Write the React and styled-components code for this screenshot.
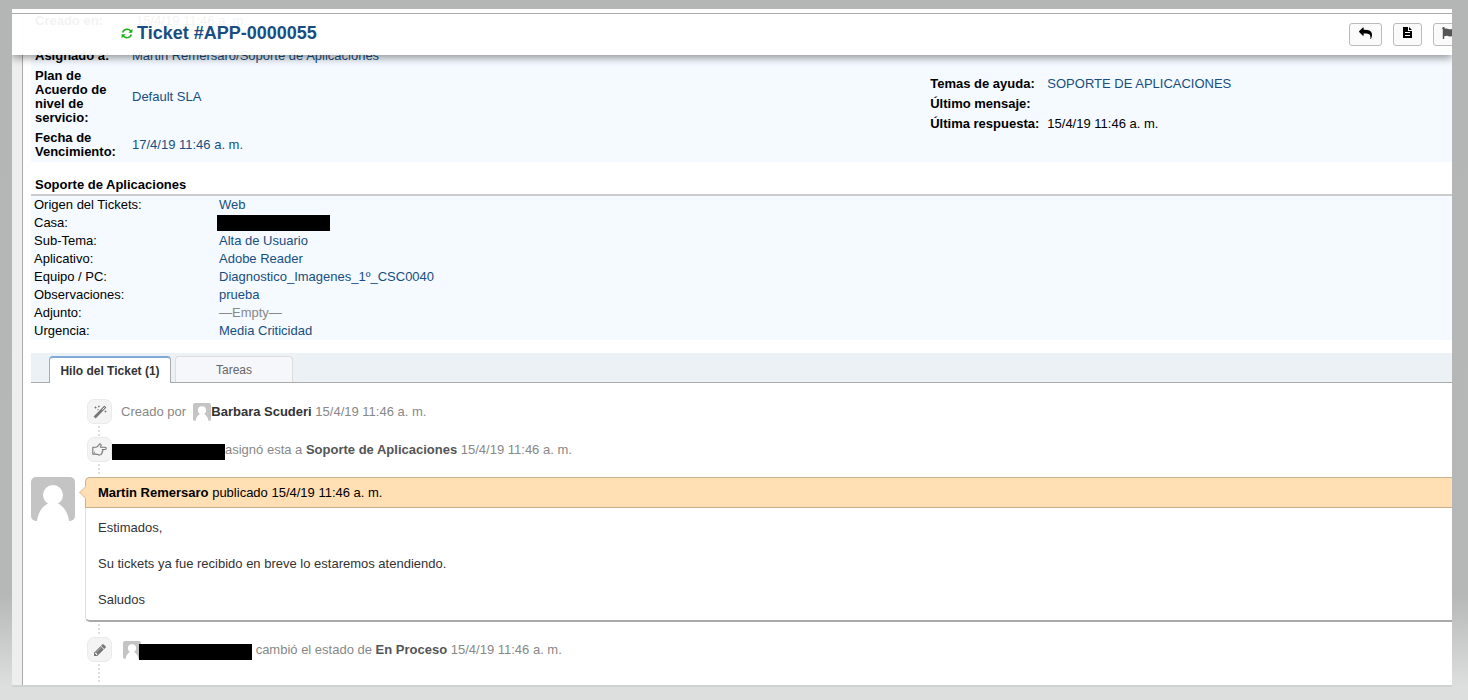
import React from 'react';
import styled, { createGlobalStyle } from 'styled-components';
import { FaFlag } from 'react-icons/fa';

const colors = {
  link: '#184e81',
  text: '#000',
  body: '#333',
  muted: '#888',
  panel: '#f4faff',
  tabs: '#ecf1f5',
  border: '#aaa',
  orange: '#ffdfb3',
};

const GlobalStyle = createGlobalStyle`
  * {
    box-sizing: border-box;
  }

  body {
    margin: 0;
    font-family: 'Liberation Sans', Arial, sans-serif;
    font-size: 13px;
    line-height: 18px;
    color: ${colors.text};
  }

  a {
    color: ${colors.link};
    text-decoration: none;
  }
`;

const Desktop = styled.div`
  display: flex;
  min-height: 100vh;
  padding: 9px 16px 15px 12px;
  background: linear-gradient(#b4b6b5 0, #b6b8b7 85%, #dddede 98%);
`;

const Page = styled.div`
  position: relative;
  display: flex;
  flex: 1;
  min-width: 0;
  padding-left: 10px;
  overflow: hidden;
  background: #eee;
  box-shadow: 0 2px 0 #d0d2d1;
`;

const Content = styled.main`
  flex: 1;
  min-width: 0;
  padding-left: 8px;
  background: #fff;
  border-left: 1px solid ${colors.border};
`;

const Sticky = styled.header`
  position: absolute;
  top: 4px;
  left: 0;
  right: 0;
  display: flex;
  justify-content: space-between;
  height: 42px;
  padding-left: 109px;
  background: rgba(255, 255, 255, 0.95);
  border-top: 1px solid ${colors.border};
  box-shadow: 0 -4px 0 #fff, 0 3px 8px rgba(0, 0, 0, 0.4);
  clip-path: inset(-4px 0 -20px 0);
`;

const Title = styled.h2`
  display: flex;
  align-items: center;
  gap: 4px;
  margin: 0;
  height: 38px;
  font-size: 18px;
  line-height: 24px;
`;

const Actions = styled.div`
  display: flex;
  gap: 11px;
  margin-top: 9px;
  margin-right: -10px;
`;

const ActionButton = styled.button`
  display: flex;
  justify-content: center;
  width: ${({ $wide }) => ($wide ? 33 : 29)}px;
  height: 23px;
  padding: 3px 0 0;
  color: ${({ $color }) => $color || '#000'};
  background: #fafafa;
  border: 1px solid #bbb;
  border-radius: 3px;
`;

const InfoPanel = styled.section`
  display: flex;
  padding-top: 2px;
  background: ${colors.panel};
`;

const InfoColumn = styled.div`
  width: ${({ $width }) => $width || 'auto'};
  padding-top: ${({ $top }) => $top || 0}px;
`;

const InfoTable = styled.table`
  border-collapse: collapse;
  margin-top: ${({ $gap }) => $gap || 0}px;

  th {
    width: ${({ $labelWidth }) => $labelWidth}px;
    padding: 3px 4px;
    font-weight: bold;
    line-height: 14px;
    text-align: left;
    white-space: ${({ $nowrap }) => ($nowrap ? 'nowrap' : 'normal')};
  }

  td {
    padding: 3px 4px;
    line-height: 14px;
  }
`;

const SectionTitle = styled.h3`
  margin: 14px 0 0;
  padding: 0 4px;
  height: 20px;
  font-size: 13px;
  line-height: 18px;
  border-bottom: 2px solid #ccc;
`;

const DetailTable = styled.table`
  width: 100%;
  border-collapse: collapse;
  background: ${colors.panel};

  th,
  td {
    height: 18px;
    padding: 0 3px;
    font-weight: normal;
    text-align: left;
  }

  th {
    width: 185px;
  }
`;

const Empty = styled.a`
  && {
    color: ${colors.muted};
  }
`;

const Redacted = styled.span`
  display: block;
  flex: none;
  width: 113px;
  height: 16px;
  margin: ${({ $margin }) => $margin || 0};
  background: #000;
`;

const Tabs = styled.nav`
  display: flex;
  align-items: flex-end;
  gap: 4px;
  height: 30px;
  margin-top: 13px;
  padding-left: 18px;
  font-size: 12px;
  background: ${colors.tabs};
  border-bottom: 1px solid ${colors.border};
`;

const Tab = styled.a`
  && {
    width: ${({ $active }) => ($active ? 122 : 118)}px;
    height: ${({ $active }) => ($active ? 27 : 26)}px;
    margin-bottom: ${({ $active }) => ($active ? -1 : 0)}px;
    color: ${({ $active }) => ($active ? colors.body : '#666')};
    font-weight: ${({ $active }) => ($active ? 'bold' : 'normal')};
    line-height: 26px;
    text-align: center;
    background: ${({ $active }) => ($active ? '#fff' : '#f5f7fa')};
    border: 1px solid ${({ $active }) => ($active ? colors.border : '#ddd')};
    border-top: ${({ $active }) => ($active ? '2px solid #81a9d7' : '1px solid #ddd')};
    border-bottom: 0;
    border-radius: 4px 4px 0 0;
  }
`;

const Thread = styled.div`
  padding-top: 16px;
`;

const Event = styled.div`
  display: flex;
  align-items: center;
  height: 25px;
  margin-left: 56px;
  color: ${colors.muted};

  b {
    color: ${({ $dark }) => ($dark ? colors.body : '#555')};
  }
`;

const EventIcon = styled.span`
  display: flex;
  flex: none;
  align-items: center;
  justify-content: center;
  width: 25px;
  height: 25px;
  margin-right: ${({ $gap }) => $gap}px;
  color: #777;
  background: #f4f4f4;
  border: 1px solid #eaeaea;
  border-radius: 7px;
`;

const Connector = styled.div`
  width: 2px;
  height: ${({ $height }) => $height}px;
  margin: 2px 0 1px 67px;
  background: repeating-linear-gradient(#ddd 0 2px, transparent 2px 4px);
`;

const EventText = styled.span`
  padding-top: 1px;
  white-space: pre;
`;

const Entry = styled.article`
  display: flex;
  align-items: flex-start;
  gap: 10px;
`;

const Message = styled.div`
  flex: 1;
  border: 1px solid #ddd;
  border-right: 0;
  border-top: 0;
  border-bottom: 2px solid ${colors.border};
  border-radius: 5px 0 0 5px;
`;

const MessageHeader = styled.div`
  position: relative;
  margin-left: -1px;
  height: 31px;
  padding: 0 12px;
  line-height: 30px;
  background: ${colors.orange};
  border: 1px solid #c9b08a;
  border-right: 0;
  border-radius: 5px 0 0 0;

  &::before {
    content: '';
    position: absolute;
    top: 10px;
    left: -5px;
    width: 8px;
    height: 8px;
    background: ${colors.orange};
    border: 1px solid #e0c8a4;
    border-top: 0;
    border-right: 0;
    transform: rotate(45deg);
  }
`;

const MessageBody = styled.div`
  padding: 11px 12px;
  color: ${colors.body};

  p {
    margin: 0 0 18px;
  }

  p:last-child {
    margin: 0;
  }
`;

const AvatarSvg = styled.svg`
  flex: none;
  width: ${({ $size }) => $size}px;
  height: ${({ $size }) => $size}px;
  border-radius: ${({ $size }) => ($size > 20 ? 5 : 2)}px;
  background: #c4c4c4;
`;

const Avatar = ({ size }) => (
  <AvatarSvg $size={size} viewBox="0 0 44 44" fill="#fff">
    <circle cx="22" cy="18" r="10" />
    <path d="M6 44C7 36 11 29 18 26h8c7 3 11 10 12 18z" />
  </AvatarSvg>
);

const RefreshIcon = () => (
  <svg width="12" height="11" viewBox="0 0 12 11" fill="none" stroke="#18b018">
    <path strokeWidth="1.5" d="M1.6 4.4C2.4 2.3 4 1.3 6 1.3c1.5 0 2.8.6 3.7 1.6M10.4 6.6C9.6 8.7 8 9.7 6 9.7c-1.5 0-2.8-.6-3.7-1.6" />
    <path fill="#18b018" stroke="none" d="M11.4.8v4H7.4zM.6 10.2v-4h4z" />
  </svg>
);

const ReplyIcon = () => (
  <svg width="13" height="13" viewBox="0 0 1792 1792" fill="currentColor">
    <path
      transform="translate(1792) scale(-1 1)"
      d="M1792 640q0 26-19 45l-512 512q-19 19-45 19t-45-19-19-45v-256h-224q-98 0-175.5 6t-154 21.5-133 42.5-105.5 69.5-80 101-48.5 138.5-17.5 181q0 55 5 123 0 6 2.5 23.5t2.5 26.5q0 15-8.5 25t-23.5 10q-16 0-28-17-7-9-13-22t-13.5-30-10.5-24q-127-285-127-451 0-199 53-333 162-403 875-403h224v-256q0-26 19-45t45-19 45 19l512 512q19 19 19 45z"
    />
  </svg>
);

const FileIcon = () => (
  <svg width="9" height="11" viewBox="0 0 9 11" fill="currentColor">
    <path
      fillRule="evenodd"
      d="M0 0h5v4h4v7H0zM2 5h5v1H2zM2 8h5v1H2zM6 0l3 3H6z"
    />
  </svg>
);

const WandIcon = () => (
  <svg width="14" height="14" viewBox="0 0 14 14" fill="none" stroke="currentColor">
    <path strokeWidth="2.8" d="M1.6 12.4L12.4 1.6" />
    <path stroke="#f4f4f4" strokeWidth="1" d="M9.2 4.8l2.4-2.4" />
    <path strokeWidth="1" d="M1.5 2.5h2M2.5 1.5v2M5 1.5h1.6M5.8.7v1.6M11.6 6.5h1.8M12.5 5.6v1.8M5 4v1.2" />
  </svg>
);

const HandIcon = () => (
  <svg
    width="15"
    height="13"
    viewBox="0 0 15 13"
    fill="none"
    stroke="currentColor"
    strokeWidth="1.1"
    strokeLinejoin="round"
  >
    <path d="M4 4.2c1.8 0 2.4-1.4 3.2-2.8.5-.9 1.9-.6 1.9.6 0 .8-.4 1.4-.6 2.2h4.6c1.6 0 1.6 2.3 0 2.3h-2.9c1 .6.8 1.8-.1 2.1.5.9.1 1.7-.7 1.9.1 1-.6 1.5-1.8 1.5-1.6 0-2.3-.8-3.6-.9" />
    <path d="M4 4.2H.8v6.9H4" />
    <path strokeWidth="1" d="M2 9.3h1" />
  </svg>
);

const PencilIcon = () => (
  <svg width="14" height="14" viewBox="0 0 1792 1792" fill="currentColor">
    <path d="M491 1536l91-91-235-235-91 91v107h128v128h107zm523-928q0-22-22-22-10 0-17 7l-542 542q-7 7-7 17 0 22 22 22 10 0 17-7l542-542q7-7 7-17zm-54-192l416 416-832 832h-416v-416zm683 96q0 53-37 90l-166 166-416-416 166-165q36-38 90-38 53 0 91 38l235 234q37 39 37 91z" />
  </svg>
);

const details = [
  ['Origen del Tickets:', 'Web'],
  ['Casa:', null],
  ['Sub-Tema:', 'Alta de Usuario'],
  ['Aplicativo:', 'Adobe Reader'],
  ['Equipo / PC:', 'Diagnostico_Imagenes_1º_CSC0040'],
  ['Observaciones:', 'prueba'],
  ['Adjunto:', '—Empty—'],
  ['Urgencia:', 'Media Criticidad'],
];

const DetailValue = ({ value }) => {
  if (!value) return <Redacted $margin="1px 0 1px -2px" />;
  if (value === '—Empty—') return <Empty href="#edit">{value}</Empty>;
  return <a href="#edit">{value}</a>;
};

const TicketInfo = () => (
  <InfoPanel>
    <InfoColumn $width="63%">
      <InfoTable $labelWidth={101}>
        <tbody>
          <tr>
            <th>Creado en:</th>
            <td>15/4/19 11:46 a. m.</td>
          </tr>
        </tbody>
      </InfoTable>
      <InfoTable $labelWidth={97} $gap={15}>
        <tbody>
          <tr>
            <th>Asignado a:</th>
            <td>
              <a href="#assign">Martin Remersaro/Soporte de Aplicaciones</a>
            </td>
          </tr>
          <tr>
            <th>Plan de Acuerdo de nivel de servicio:</th>
            <td>
              <a href="#sla">Default SLA</a>
            </td>
          </tr>
          <tr>
            <th>Fecha de Vencimiento:</th>
            <td>
              <a href="#due">17/4/19 11:46 a. m.</a>
            </td>
          </tr>
        </tbody>
      </InfoTable>
    </InfoColumn>
    <InfoColumn $top={63}>
      <InfoTable $labelWidth={115} $nowrap>
        <tbody>
          <tr>
            <th>Temas de ayuda:</th>
            <td>
              <a href="#topic">SOPORTE DE APLICACIONES</a>
            </td>
          </tr>
          <tr>
            <th>Último mensaje:</th>
            <td />
          </tr>
          <tr>
            <th>Última respuesta:</th>
            <td>15/4/19 11:46 a. m.</td>
          </tr>
        </tbody>
      </InfoTable>
    </InfoColumn>
  </InfoPanel>
);

const App = () => (
  <>
    <GlobalStyle />
    <Desktop>
      <Page>
        <Content>
          <TicketInfo />
          <SectionTitle>Soporte de Aplicaciones</SectionTitle>
          <DetailTable>
            <tbody>
              {details.map(([label, value]) => (
                <tr key={label}>
                  <th>{label}</th>
                  <td>
                    <DetailValue value={value} />
                  </td>
                </tr>
              ))}
            </tbody>
          </DetailTable>
          <Tabs>
            <Tab href="#thread" $active>
              Hilo del Ticket (1)
            </Tab>
            <Tab href="#tasks">Tareas</Tab>
          </Tabs>
          <Thread>
            <Event $dark>
              <EventIcon $gap={9}>
                <WandIcon />
              </EventIcon>
              <EventText>Creado por{'  '}</EventText>
              <Avatar size={18} />
              <EventText>
                <b>Barbara Scuderi</b> 15/4/19 11:46 a. m.
              </EventText>
            </Event>
            <Connector $height={10} />
            <Event>
              <EventIcon $gap={0}>
                <HandIcon />
              </EventIcon>
              <Redacted $margin="4px 0 0" />
              <EventText>
                asignó esta a <b>Soporte de Aplicaciones</b> 15/4/19 11:46 a. m.
              </EventText>
            </Event>
            <Connector $height={12} />
            <Entry>
              <Avatar size={44} />
              <Message>
                <MessageHeader>
                  <b>Martin Remersaro</b> publicado 15/4/19 11:46 a. m.
                </MessageHeader>
                <MessageBody>
                  <p>Estimados,</p>
                  <p>Su tickets ya fue recibido en breve lo estaremos atendiendo.</p>
                  <p>Saludos</p>
                </MessageBody>
              </Message>
            </Entry>
            <Connector $height={12} />
            <Event>
              <EventIcon $gap={11}>
                <PencilIcon />
              </EventIcon>
              <Avatar size={18} />
              <Redacted $margin="4px 0 0 -2px" />
              <EventText>
                {' '}
                cambió el estado de <b>En Proceso</b> 15/4/19 11:46 a. m.
              </EventText>
            </Event>
            <Connector $height={20} />
          </Thread>
        </Content>
        <Sticky>
          <Title>
            <RefreshIcon />
            <a href="#ticket">Ticket #APP-0000055</a>
          </Title>
          <Actions>
            <ActionButton $wide aria-label="Responder">
              <ReplyIcon />
            </ActionButton>
            <ActionButton aria-label="Nota">
              <FileIcon />
            </ActionButton>
            <ActionButton $color="#555" aria-label="Estado">
              <FaFlag size={12} />
            </ActionButton>
          </Actions>
        </Sticky>
      </Page>
    </Desktop>
  </>
);

export default App;
